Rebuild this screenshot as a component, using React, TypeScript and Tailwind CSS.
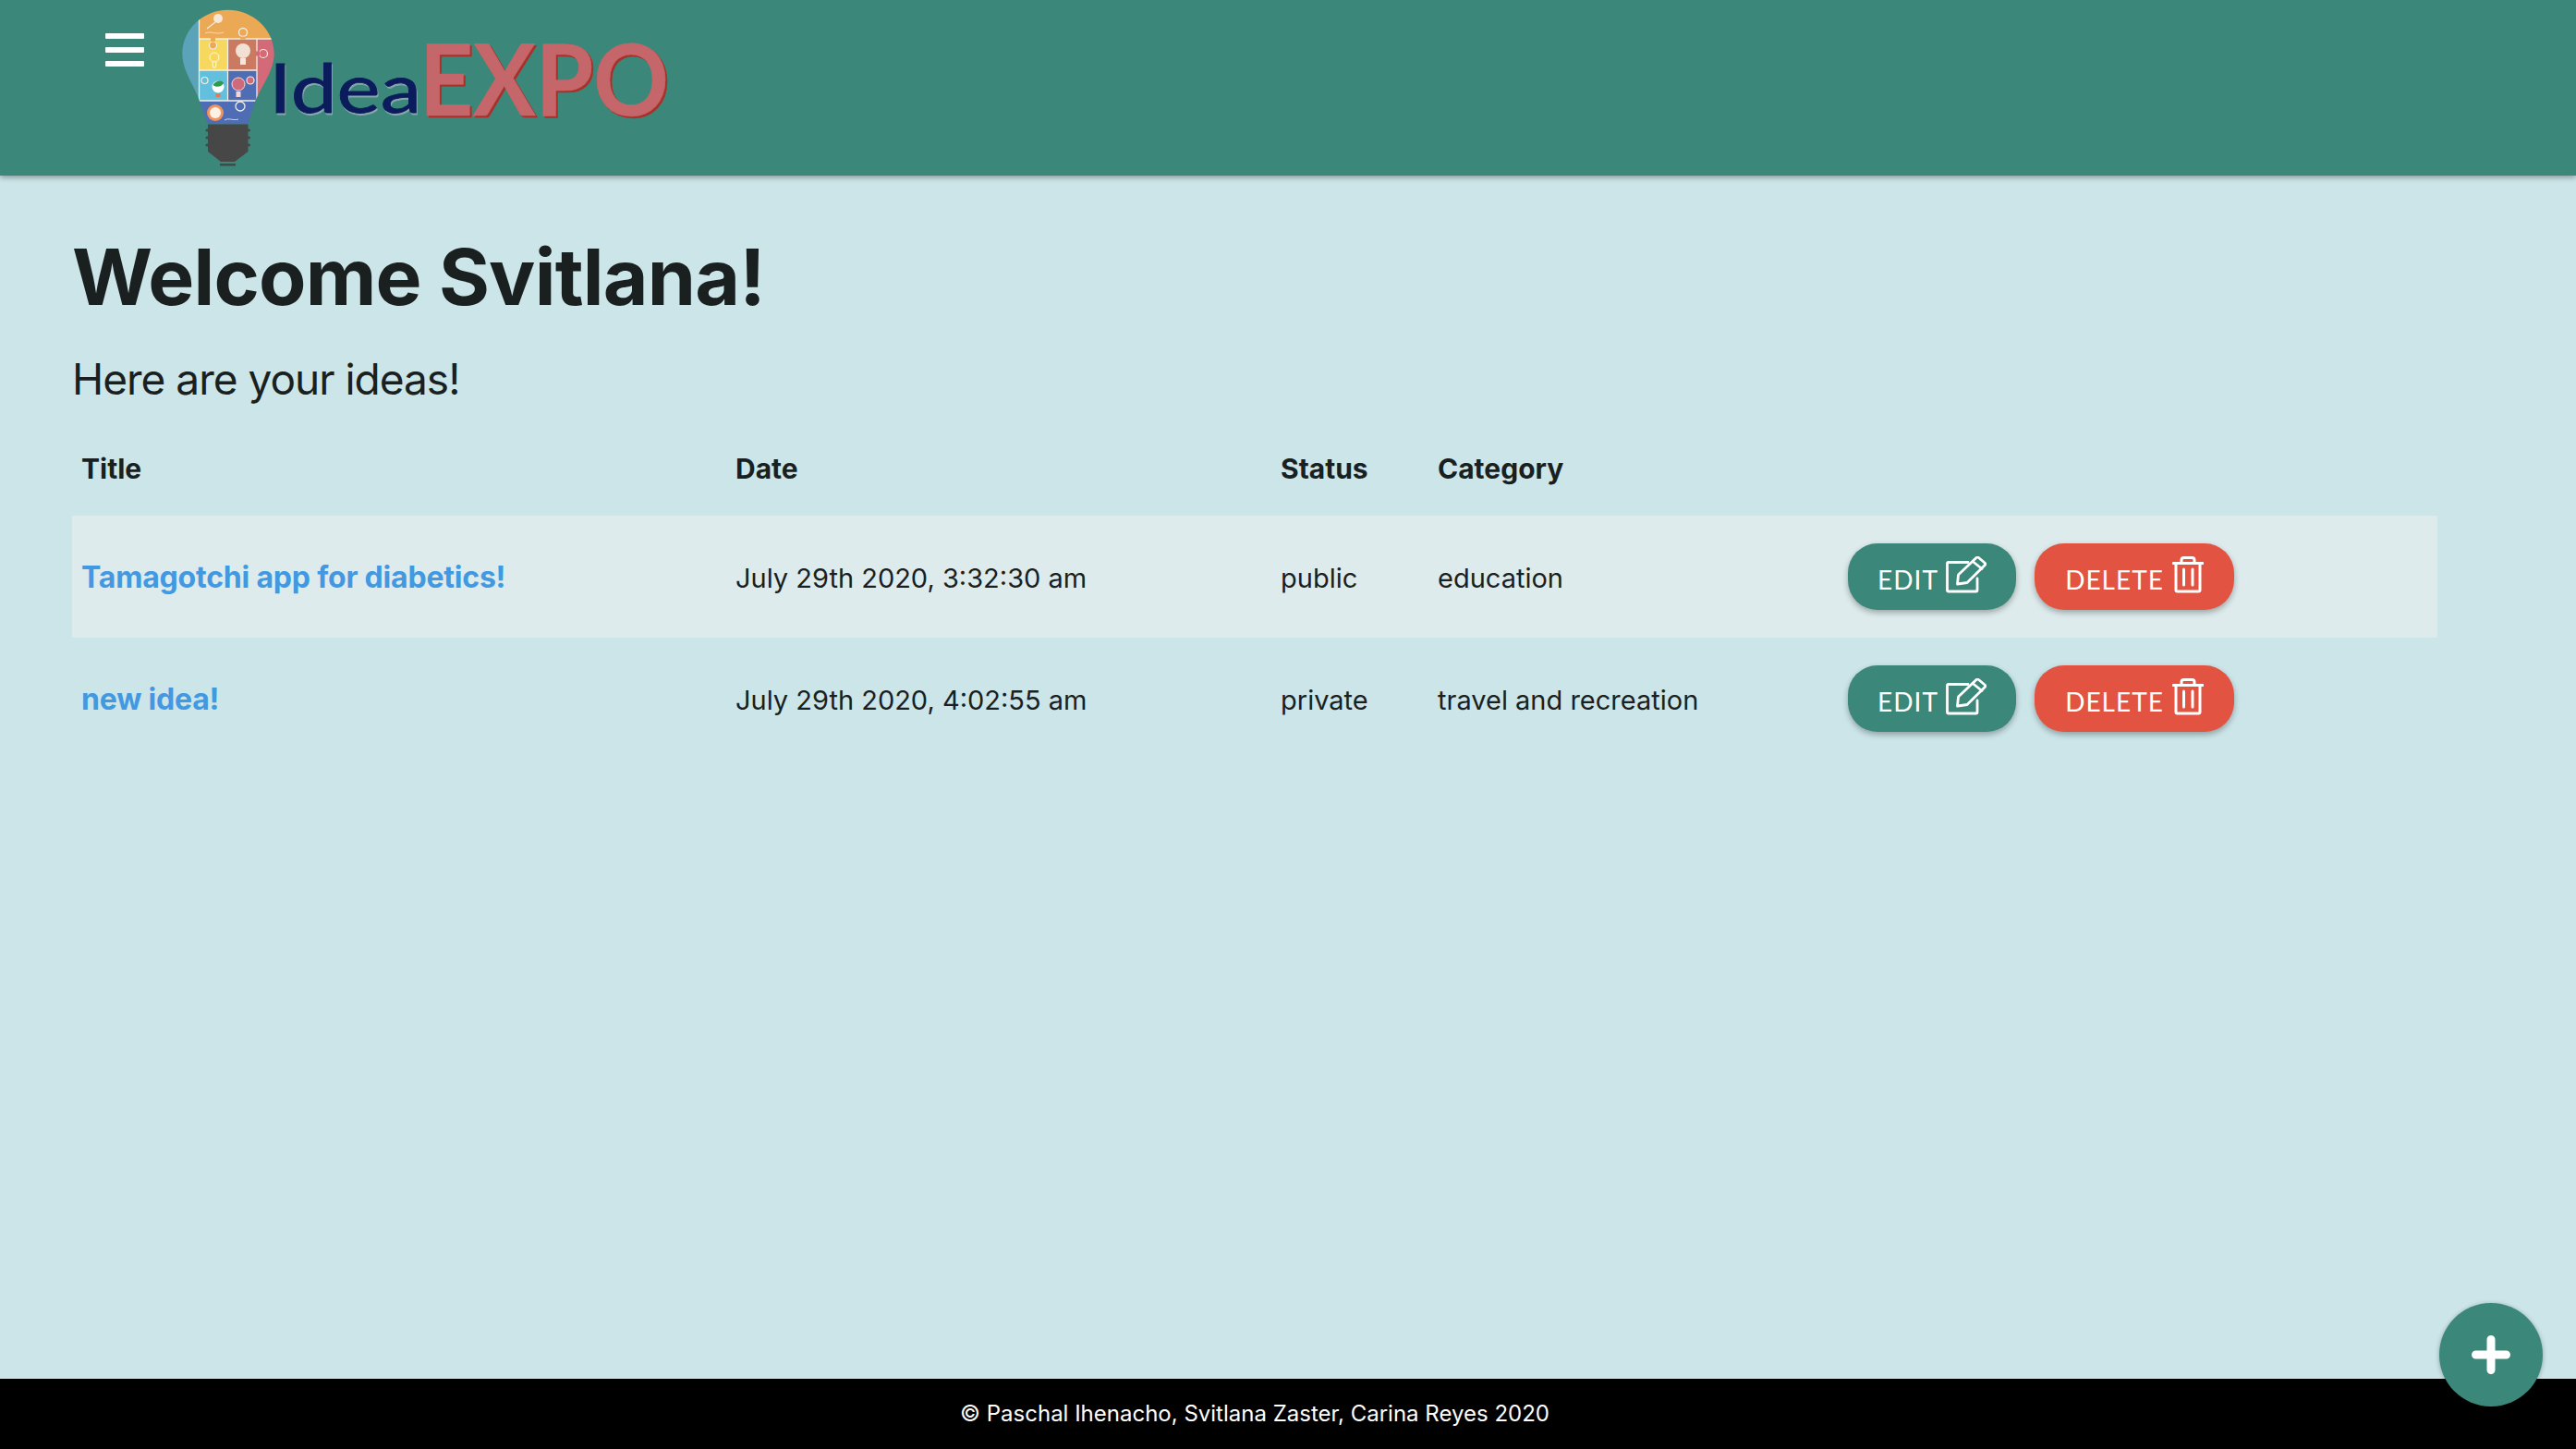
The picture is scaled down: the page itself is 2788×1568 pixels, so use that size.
import React from 'react';

const ideas = [
    { title: 'Tamagotchi app for diabetics!', date: 'July 29th 2020, 3:32:30 am', status: 'public', category: 'education' },
    { title: 'new idea!', date: 'July 29th 2020, 4:02:55 am', status: 'private', category: 'travel and recreation' },
];

const EditIcon = () => (
    <svg viewBox="0 0 44 40" className="w-[44px] h-[40px] mb-[4px]" fill="none" stroke="white" strokeWidth="2.8" strokeLinejoin="round" strokeLinecap="round">
        <path d="M24 6.500H2.500a1 1 0 0 0-1 1V37a1 1 0 0 0 1 1H33a1 1 0 0 0 1-1V24" />
        <path d="M12.500 30 13.500 20 33 1.500a2 2 0 0 1 2.500 0l6.500 5.500a2 2 0 0 1 0 2.800L23 28.500Z" />
        <path d="M29 5.500 39 13.500" />
    </svg>
);

const TrashIcon = () => (
    <svg viewBox="0 0 34 40" className="w-[34px] h-[40px] mb-[4px] ml-[1px]" fill="none" stroke="white" strokeWidth="3" strokeLinejoin="round" strokeLinecap="round">
        <path d="M1 7.500H33" />
        <path d="M10 7V4a2.500 2.500 0 0 1 2.500-2.500h9A2.500 2.500 0 0 1 24 4v3" />
        <path d="M4 8V36.500a1.500 1.500 0 0 0 1.500 1.500h23a1.500 1.500 0 0 0 1.500-1.500V8" />
        <path d="M12.500 14V31M22 14V31" />
    </svg>
);

const Logo = () => (
    <svg viewBox="0 0 560 190" className="w-[560px] h-[190px] shrink-0">
        <defs>
            <clipPath id="bulb">
                <path d="M66.700 10.700C40 10.700 17.300 31.700 17.300 58.300C17.300 78.300 33.300 96.700 37.300 113.300L45 134.300H88.300L95 113.300C100 96.700 116.700 78.300 116.700 58.300C116.700 31.700 93.300 10.700 66.700 10.700Z" />
            </clipPath>
        </defs>
        <g clipPath="url(#bulb)">
            <rect x="0" y="0" width="36" height="140" fill="#5ba3b9" />
            <rect x="36" y="0" width="90" height="42" fill="#eba955" />
            <rect x="36" y="42" width="30" height="34" fill="#f7d85f" />
            <rect x="67" y="42" width="31" height="34" fill="#c97a60" />
            <rect x="98" y="42" width="30" height="67" fill="#d46a78" />
            <rect x="36" y="76" width="30" height="33" fill="#62c0de" />
            <rect x="67" y="76" width="31" height="33" fill="#4f6db3" />
            <rect x="30" y="109" width="90" height="30" fill="#4e6db5" />
            <path d="M35.500 20V109M35.500 42H116M35.500 76H98M66.500 42V109M98 42V109M36 109H98" stroke="#f3efe6" strokeWidth="1.300" fill="none" />
            <circle cx="83" cy="35" r="4.500" fill="#eba955" stroke="#f3efe6" strokeWidth="1.300" />
            <path d="M80 39.500V42.500H86V39.500Z" fill="#eba955" />
            <circle cx="50.500" cy="49" r="4" fill="#eba955" stroke="#f3efe6" strokeWidth="1.200" />
            <path d="M48 41V45H53V41Z" fill="#eba955" />
            <circle cx="105" cy="58" r="4.500" fill="#d46a78" stroke="#f3efe6" strokeWidth="1.200" />
            <path d="M97 55.500H101V60.500H97Z" fill="#d46a78" />
            <circle cx="41.500" cy="87" r="3.500" fill="#62c0de" stroke="#f3efe6" strokeWidth="1.200" />
            <circle cx="91" cy="87" r="4" fill="#d46a78" stroke="#f3efe6" strokeWidth="1.200" />
            <circle cx="80" cy="115" r="5" fill="#4e6db5" stroke="#f3efe6" strokeWidth="1.300" />
            <circle cx="56" cy="20" r="5" fill="#f6e6d6" />
            <path d="M53 24 44 31" stroke="#f6e6d6" strokeWidth="1.500" />
            <path d="M42 36C48 33 54 38 62 35" stroke="#f6e6d6" strokeWidth="0.800" fill="none" />
            <circle cx="52" cy="62" r="5" fill="none" stroke="#fff8d8" strokeWidth="1" />
            <path d="M50 67 50.500 73H53.500L54 67" fill="none" stroke="#fff8d8" strokeWidth="1" />
            <circle cx="83" cy="55" r="8" fill="#f1e0d3" />
            <rect x="80" y="63" width="6" height="7" fill="#f4e8dc" />
            <circle cx="56" cy="94" r="6.500" fill="#fff" />
            <path d="M50.500 92C53 87 60 86 62 90C60 94 54 95 50.500 92Z" fill="#2e9a4b" />
            <rect x="53.500" y="101" width="5" height="4" fill="#dc7e55" />
            <circle cx="78" cy="91" r="7" fill="#cf6a7a" stroke="#f1d6d9" strokeWidth="1" />
            <rect x="75.500" y="99" width="5" height="6" fill="#f1d6d9" />
            <circle cx="53" cy="122" r="9" fill="#f1935c" />
            <circle cx="53" cy="122" r="6" fill="#fdf1e6" />
            <path d="M63 130C68 127 72 131 78 129" stroke="#f3efe6" strokeWidth="0.800" fill="none" />
        </g>
        <path d="M45 134.500H88.500V164L74 175H59L45 164Z" fill="#474747" />
        <path d="M44 141H89.500M44 149H89.500M44 157H89.500" stroke="#474747" strokeWidth="3" strokeLinecap="round" />
        <rect x="58" y="177" width="17" height="2.500" fill="#474747" />
        <text
            x="111"
            y="122"
            textLength="165"
            lengthAdjust="spacingAndGlyphs"
            fill="#0b1c5c"
            stroke="#0b1c5c"
            strokeWidth="0.800"
            className="text-[74px] font-[Lato,sans-serif] drop-shadow-[1.500px_2px_0_#8aa5b0]"
        >
            Idea
        </text>
        <text
            x="274"
            y="125"
            textLength="270"
            lengthAdjust="spacingAndGlyphs"
            fill="#c5666a"
            stroke="#c5666a"
            strokeWidth="0.600"
            className="text-[108px] font-bold font-[Lato,sans-serif] drop-shadow-[2px_2px_0_#a9302a]"
        >
            EXPO
        </text>
    </svg>
);

const ActionButton = ({ label, icon, color, width }: { label: string; icon: React.ReactNode; color: string; width: string }) => (
    <button className={`${color} ${width} h-[72px] rounded-[32px] flex items-center justify-center gap-[8px] text-white text-[28px] font-[Lato,sans-serif] tracking-[1px] shadow-[0_3px_6px_rgba(0,0,0,0.3)]`}>
        <span className="mt-[6px]">{label}</span>
        {icon}
    </button>
);

export default function App() {
    return (
        <div className="min-h-screen flex flex-col bg-[#cbe5e8] text-[#1a1f1f] font-[Inter,sans-serif]">
            <header className="h-[190px] shrink-0 bg-[#3b8779] flex shadow-[0_2px_6px_rgba(0,0,0,0.35)]">
                <div className="ml-[114px] mt-[36px] w-[42px] flex flex-col gap-[9px] shrink-0">
                    <span className="h-[6px] rounded-[1px] bg-white" />
                    <span className="h-[6px] rounded-[1px] bg-white" />
                    <span className="h-[6px] rounded-[1px] bg-white" />
                </div>
                <div className="ml-[24px]">
                    <Logo />
                </div>
            </header>
            <main className="flex-1 pl-[78px] pr-[150px] pt-[60px]">
                <h1 className="text-[84px] leading-[1.2] font-bold tracking-[-0.8px]">Welcome Svitlana!</h1>
                <h2 className="mt-[32px] text-[46px] leading-[1.2] tracking-[-1px]">Here are your ideas!</h2>
                <table className="mt-[18px] w-full table-fixed border-collapse text-[29px]">
                    <colgroup>
                        <col className="w-[707px]" />
                        <col className="w-[590px]" />
                        <col className="w-[170px]" />
                        <col className="w-[444px]" />
                        <col />
                    </colgroup>
                    <thead>
                        <tr className="h-[102px] text-left text-[30px]">
                            <th className="pl-[10px] pt-[2px] font-bold">Title</th>
                            <th className="pl-[11px] pt-[2px] font-bold">Date</th>
                            <th className="pl-[11px] pt-[2px] font-bold">Status</th>
                            <th className="pl-[11px] pt-[2px] font-bold">Category</th>
                            <th />
                        </tr>
                    </thead>
                    <tbody>
                        {ideas.map((idea, i) => (
                            <tr key={idea.title} className={`h-[132px] ${i === 0 ? 'bg-[#ddebec]' : ''}`}>
                                <td className="pl-[10px] pt-[2px] font-bold text-[32px] tracking-[-0.2px] text-[#4299e1]">{idea.title}</td>
                                <td className="pl-[11px] pt-[3px]">{idea.date}</td>
                                <td className="pl-[11px] pt-[3px]">{idea.status}</td>
                                <td className="pl-[11px] pt-[3px]">{idea.category}</td>
                                <td className="pl-[11px]">
                                    <div className="flex gap-[20px]">
                                        <ActionButton label="EDIT" icon={<EditIcon />} color="bg-[#3b8779]" width="w-[182px]" />
                                        <ActionButton label="DELETE" icon={<TrashIcon />} color="bg-[#e25441]" width="w-[216px]" />
                                    </div>
                                </td>
                            </tr>
                        ))}
                    </tbody>
                </table>
            </main>
            <footer className="h-[76px] shrink-0 bg-black text-white text-[24px] flex items-center justify-center pr-[72px]">
                © Paschal Ihenacho, Svitlana Zaster, Carina Reyes 2020
            </footer>
            <button className="fixed right-[36px] bottom-[46px] w-[112px] h-[112px] rounded-full bg-[#3b8779] flex items-center justify-center shadow-[0_1px_5px_rgba(0,0,0,0.3)]">
                <svg viewBox="0 0 42 42" className="w-[42px] h-[42px]" stroke="white" strokeWidth="9" strokeLinecap="round">
                    <path d="M21 4.500V37.500M4.500 21H37.500" />
                </svg>
            </button>
        </div>
    );
}
